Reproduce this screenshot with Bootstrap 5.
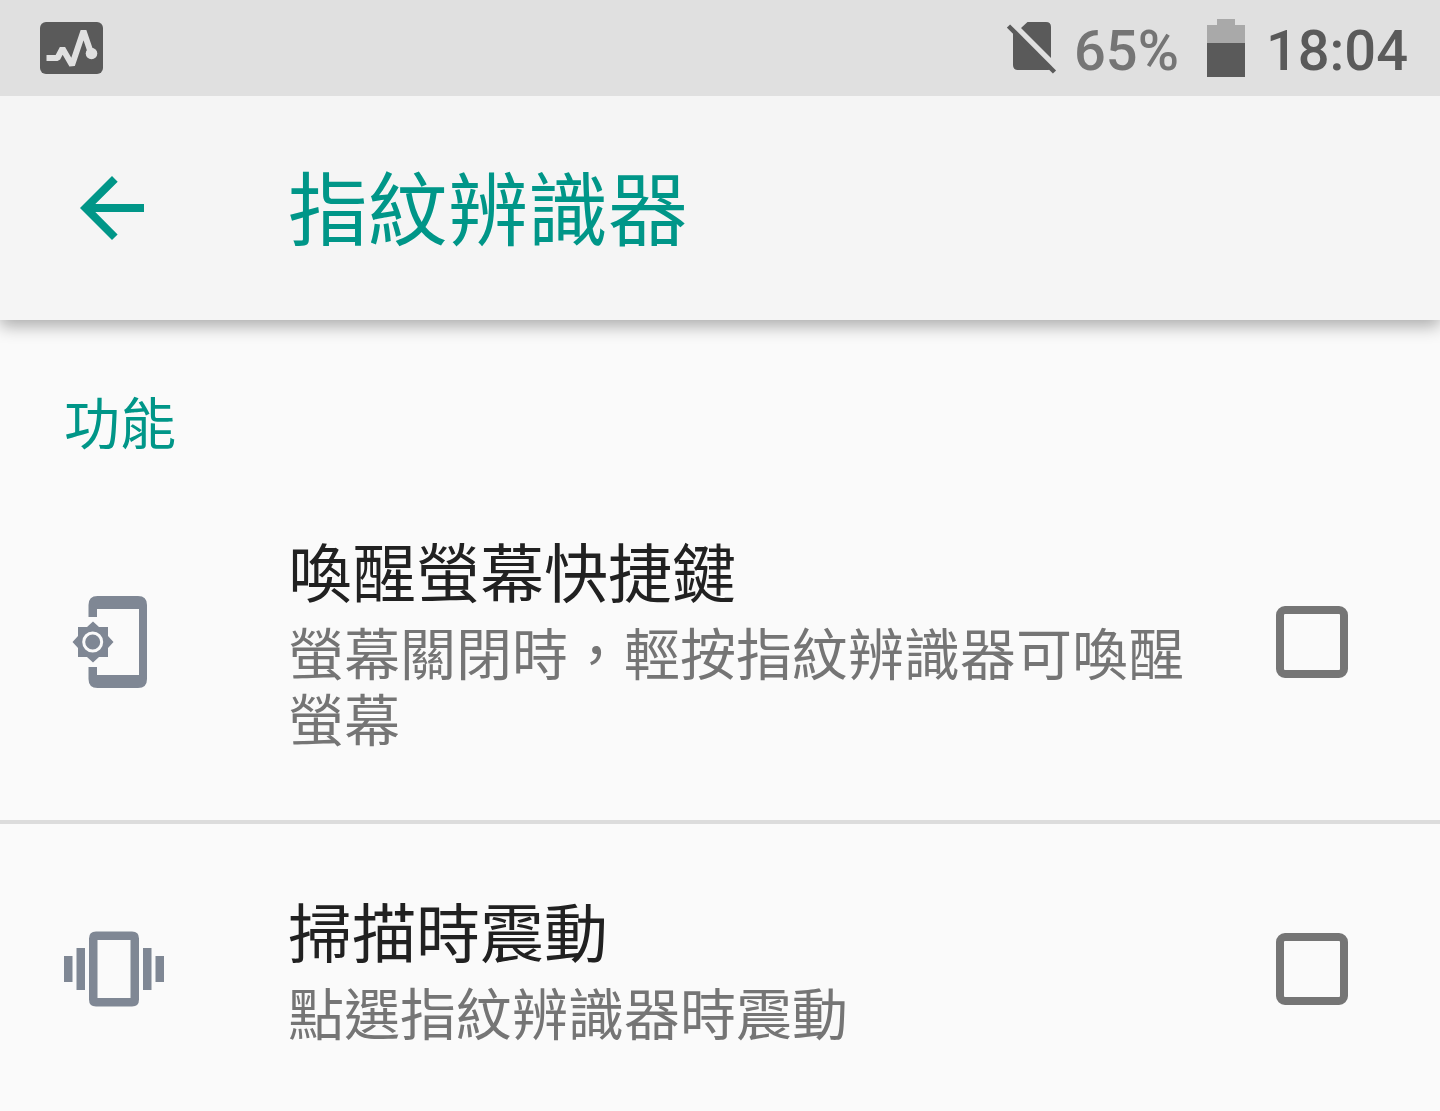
<!DOCTYPE html>
<html lang="zh-Hant">
<head>
<meta charset="utf-8">
<meta name="viewport" content="width=device-width, initial-scale=1">
<title>指紋辨識器</title>
<link href="https://cdn.jsdelivr.net/npm/bootstrap@5.3.0/dist/css/bootstrap.min.css" rel="stylesheet">
<style>
body { background: #fafafa; color: #212121; font-family: Roboto, "Noto Sans CJK TC", sans-serif; }
svg { display: block; flex: none; }
.status-bar { height: 96px; padding: 0 32px 0 40px; background: #e0e0e0; color: #5a5a5a; font-size: 56px; line-height: 96px; font-weight: 500; }
.status-level { color: #757575; padding-top: 6px; margin: 0 28px 0 17px; }
.status-clock { padding-top: 6px; margin-left: 21px; }
.app-bar { height: 224px; padding: 0 64px; background: #f5f5f5; color: #009688; box-shadow: 0 6px 16px rgba(0,0,0,.32); }
.lead-slot { flex: 0 0 224px; color: #7f8794; }
.app-title { padding-top: 8px; font-size: 80px; line-height: 112px; font-weight: 400; }
.back-btn { color: #009688; }
.section-name { padding: 66px 64px 0; font-size: 56px; line-height: 78px; color: #009688; font-weight: 400; }
.pref-row { padding: 65px 92px 65px 64px; cursor: pointer; }
.pref-row + .pref-row { border-top: 4px solid #dcdcdc; padding-bottom: 60px; padding-top: 65px; }
.pref-title { font-size: 64px; line-height: 94px; }
.pref-note { font-size: 56px; line-height: 66px; color: #757575; }
.pref-text { padding-right: 88px; }
.pref-row .form-check-input { width: 72px; height: 72px; border: 8px solid #757575; border-radius: 9px; background-color: transparent; }
</style>
</head>
<body>
<div class="status-bar position-relative z-1 d-flex align-items-center justify-content-between">
  <svg width="63" height="52" viewBox="0 0 63 52" aria-hidden="true"><rect width="63" height="52" rx="6" fill="#5a5a5a"/><path d="M6.500 36H17.500L22.500 26.500L32 43L43.500 9L51 31" fill="none" stroke="#e0e0e0" stroke-width="6" stroke-linejoin="bevel"/><circle cx="51.500" cy="31.500" r="5.800" fill="#e0e0e0"/></svg>
  <div class="d-flex align-items-center">
    <svg width="50" height="52" viewBox="0 0 50 52" aria-hidden="true"><path d="M20.500 0H39Q44 0 44 5V36L14 6ZM6 9L44 47Q43 48 41 48H11Q6 48 6 43Z" fill="#5a5a5a"/><path d="M1.500 4L47.500 50" stroke="#5a5a5a" stroke-width="4.500"/></svg>
    <span class="status-level">65%</span>
    <svg width="38" height="58" viewBox="0 0 38 58" aria-hidden="true"><path d="M10 0H28V6H38V24H0V6H10Z" fill="#a9a9a9"/><path d="M0 24H38V58H0Z" fill="#5a5a5a"/></svg>
    <span class="status-clock">18:04</span>
  </div>
</div>
<header class="app-bar position-relative d-flex align-items-center">
  <div class="lead-slot">
    <button type="button" class="back-btn btn border-0 p-0" aria-label="返回">
      <svg width="96" height="96" viewBox="0 0 96 96"><path d="M80 44H31.300L53.700 21.700L48 16L16 48L48 80L53.600 74.400L31.300 52H80Z" fill="currentColor"/></svg>
    </button>
  </div>
  <h1 class="app-title mb-0">指紋辨識器</h1>
</header>
<main>
  <h2 class="section-name m-0">功能</h2>
  <label class="pref-row d-flex align-items-center" for="wake">
    <span class="lead-slot">
      <svg width="100" height="100" viewBox="0 0 100 100" aria-hidden="true"><path d="M24.500 25V13Q24.500 4 33.500 4H74Q83 4 83 13V87Q83 96 74 96H33.500Q24.500 96 24.500 87V75H33V83H75V17H33V25Z" fill="currentColor"/><path d="M29 29.500L35 35H44V44L49.500 50L44 56V65H35L29 70.500L23 65H14V56L8.500 50L14 44V35H23Z" fill="currentColor"/><circle cx="28.700" cy="50" r="9" fill="none" stroke="#fafafa" stroke-width="3"/></svg>
    </span>
    <span class="pref-text flex-grow-1">
      <span class="pref-title d-block">喚醒螢幕快捷鍵</span>
      <span class="pref-note d-block">螢幕關閉時，輕按指紋辨識器可喚醒螢幕</span>
    </span>
    <input class="form-check-input flex-shrink-0 m-0" type="checkbox" id="wake">
  </label>
  <label class="pref-row d-flex align-items-center" for="vibrate">
    <span class="lead-slot">
      <svg width="100" height="76" viewBox="0 0 100 76" aria-hidden="true"><path d="M0 25H8.500V51H0ZM12.500 17H21V59H12.500ZM79 17H87.500V59H79ZM91.500 25H100V51H91.500Z" fill="currentColor"/><path fill-rule="evenodd" d="M32 .5H68Q75 .5 75 7.500V68.500Q75 75.500 68 75.500H32Q25 75.500 25 68.500V7.500Q25 .5 32 .5ZM33.500 9V67H66.500V9Z" fill="currentColor"/></svg>
    </span>
    <span class="pref-text flex-grow-1">
      <span class="pref-title d-block">掃描時震動</span>
      <span class="pref-note d-block">點選指紋辨識器時震動</span>
    </span>
    <input class="form-check-input flex-shrink-0 m-0" type="checkbox" id="vibrate">
  </label>
</main>
<script src="https://cdn.jsdelivr.net/npm/bootstrap@5.3.0/dist/js/bootstrap.bundle.min.js"></script>
</body>
</html>
